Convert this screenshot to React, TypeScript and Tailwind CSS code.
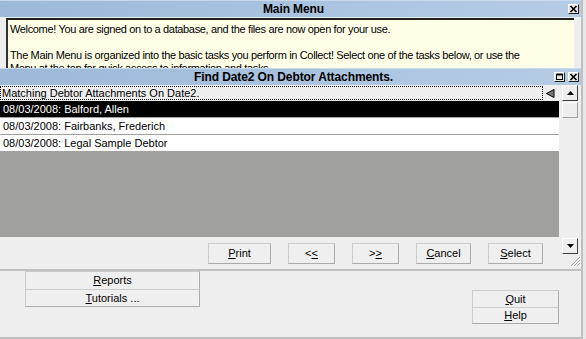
import React from "react";

const ROWS = [
  "08/03/2008: Balford, Allen",
  "08/03/2008: Fairbanks, Frederich",
  "08/03/2008: Legal Sample Debtor",
];

function CloseGlyph() {
  return (
    <svg width="9" height="8" viewBox="0 0 9 8">
      <path d="M1.5 1 L7.5 7 M7.5 1 L1.5 7" stroke="#000" strokeWidth="1.6" />
    </svg>
  );
}

function RestoreGlyph() {
  return (
    <svg width="9" height="8" viewBox="0 0 9 8">
      <rect x="1.5" y="1.5" width="6" height="5" fill="none" stroke="#000" strokeWidth="1" />
      <path d="M1.5 1.5 H7.5" stroke="#000" strokeWidth="2" />
    </svg>
  );
}

function TitleButton({ children }: { children: React.ReactNode }) {
  return (
    <div className="w-[11px] h-[10px] flex items-center justify-center bg-[#e4e4e4] border border-t-white border-l-white border-r-[#202020] border-b-[#202020]">
      {children}
    </div>
  );
}

function TitleBar({ title, children }: { title: string; children: React.ReactNode }) {
  return (
    <div className="relative h-[17px] flex items-center justify-center bg-gradient-to-r from-[#9cb9d8] via-[#a9c3df] to-[#b6cce5] border-t border-[#c8d9ec]">
      <span className="text-[12px] font-bold text-black leading-none pl-[6px] tracking-[-0.1px]">{title}</span>
      <div className="absolute right-[2px] top-[3px] flex gap-[3px]">{children}</div>
    </div>
  );
}

function Btn({ w, children }: { w: string; children: React.ReactNode }) {
  return (
    <div
      className={`${w} h-[21px] flex items-center justify-center bg-[#efefef] border border-[#cccccc] border-r-[#ababab] border-b-[#ababab] text-[11px] text-black`}
    >
      {children}
    </div>
  );
}

function ScrollBtn({ down }: { down?: boolean }) {
  return (
    <div className="w-[16px] h-[16px] flex items-center justify-center bg-[#eeeeee] border border-t-white border-l-white border-r-[#404040] border-b-[#404040]">
      <svg width="7" height="4" viewBox="0 0 7 4">
        {down ? <path d="M0 0 H7 L3.5 4 Z" fill="#000" /> : <path d="M0 4 H7 L3.5 0 Z" fill="#000" />}
      </svg>
    </div>
  );
}

export default function App() {
  return (
    <div className="w-[586px] h-[339px] flex bg-[#eeeeee] overflow-hidden font-['Liberation_Sans',Arial,sans-serif] text-black">
      <div className="w-[581px] flex flex-col">
        {/* main menu window */}
        <TitleBar title="Main Menu">
          <TitleButton>
            <CloseGlyph />
          </TitleButton>
        </TitleBar>
        <div className="ml-[6px] mt-[1px] w-[568px] h-[50px] overflow-hidden bg-[#ffffe8] border-t-2 border-l-2 border-t-[#202020] border-l-[#303030] pl-[2px] pt-[3px] text-[11px] leading-[13px] tracking-[-0.35px]">
          <p>Welcome! You are signed on to a database, and the files are now open for your use.</p>
          <p className="mt-[13px]">
            The Main Menu is organized into the basic tasks you perform in Collect! Select one of the tasks below, or use the
            <br />
            Menu at the top for quick access to information and tasks.
          </p>
        </div>

        {/* find window */}
        <TitleBar title="Find Date2 On Debtor Attachments.">
          <TitleButton>
            <RestoreGlyph />
          </TitleButton>
          <TitleButton>
            <CloseGlyph />
          </TitleButton>
        </TitleBar>
        <div className="flex">
          <div className="w-[559px] flex flex-col">
            <div className="h-[16px] flex items-center">
              <div className="w-[543px] h-[14px] border border-dotted border-black flex items-center pl-[1px] text-[11px] leading-none">
                Matching Debtor Attachments On Date2.
              </div>
              <svg className="ml-[3px]" width="9" height="9" viewBox="0 0 9 9">
                <path d="M8 0.5 V8.5 L0.5 4.5 Z" fill="#7a7a7a" stroke="#000" strokeWidth="1" />
              </svg>
            </div>
            {ROWS.map((r, i) => (
              <div
                key={r}
                className={`h-[17px] flex items-center pl-[3px] text-[11px] border-b border-[#a0a19e] ${
                  i === 0 ? "bg-black text-white" : "bg-white text-black"
                }`}
              >
                {r}
              </div>
            ))}
            <div className="h-[85px] bg-[#a0a19e]" />
            <div className="h-[32px] flex justify-end gap-[17px] pr-[16px] pt-[6px]">
              <Btn w="w-[63px]">
                <u>P</u>rint
              </Btn>
              <Btn w="w-[47px]">
                &lt;<u>&lt;</u>
              </Btn>
              <Btn w="w-[47px]">
                &gt;<u>&gt;</u>
              </Btn>
              <Btn w="w-[55px]">
                <u>C</u>ancel
              </Btn>
              <Btn w="w-[55px]">
                <u>S</u>elect
              </Btn>
            </div>
          </div>
          <div className="w-[22px] flex flex-col pl-[3px]">
            <ScrollBtn />
            <div className="mt-[1px] w-[16px] h-[16px] bg-[#eeeeee] border border-t-white border-l-white border-r-[#a0a0a0] border-b-[#a0a0a0]" />
            <div className="h-[120px]" />
            <ScrollBtn down />
            <svg className="ml-[8px] mt-[2px]" width="11" height="11" viewBox="0 0 11 11">
              <path d="M10 1 L1 10 M10 4 L4 10 M10 7 L7 10" stroke="#9a9a9a" strokeWidth="1" />
              <path d="M10.5 2 L2 10.5 M10.5 5 L5 10.5 M10.5 8 L8 10.5" stroke="#ffffff" strokeWidth="0.8" />
            </svg>
          </div>
        </div>

        {/* main menu buttons */}
        <div className="h-[2px] bg-[#c0c0c0]" />
        <div className="h-[66px] flex justify-between">
          <div className="ml-[25px] flex flex-col">
            <div className="w-[175px] h-[18px] flex items-center justify-center bg-[#efefef] border border-[#cccccc] border-r-[#ababab] border-b-0 text-[11px]">
              <span>
                <u>R</u>eports
              </span>
            </div>
            <div className="w-[175px] h-[18px] flex items-center justify-center bg-[#efefef] border border-[#cccccc] border-r-[#ababab] border-b-[#ababab] text-[11px]">
              <span>
                <u>T</u>utorials ...
              </span>
            </div>
          </div>
          <div className="mr-[22px] mt-[19px] flex flex-col">
            <div className="w-[87px] h-[17px] flex items-center justify-center bg-[#efefef] border border-[#cccccc] border-r-[#ababab] border-b-0 text-[11px]">
              <span>
                <u>Q</u>uit
              </span>
            </div>
            <div className="w-[87px] h-[17px] flex items-center justify-center bg-[#efefef] border border-[#cccccc] border-r-[#ababab] border-b-[#ababab] text-[11px]">
              <span>
                <u>H</u>elp
              </span>
            </div>
          </div>
        </div>
        <div className="h-[2px] bg-[#c0c0c0]" />
      </div>
      <div className="w-[5px] border-l-2 border-[#c0c0c0] bg-[#e8e8e8]" />
    </div>
  );
}
